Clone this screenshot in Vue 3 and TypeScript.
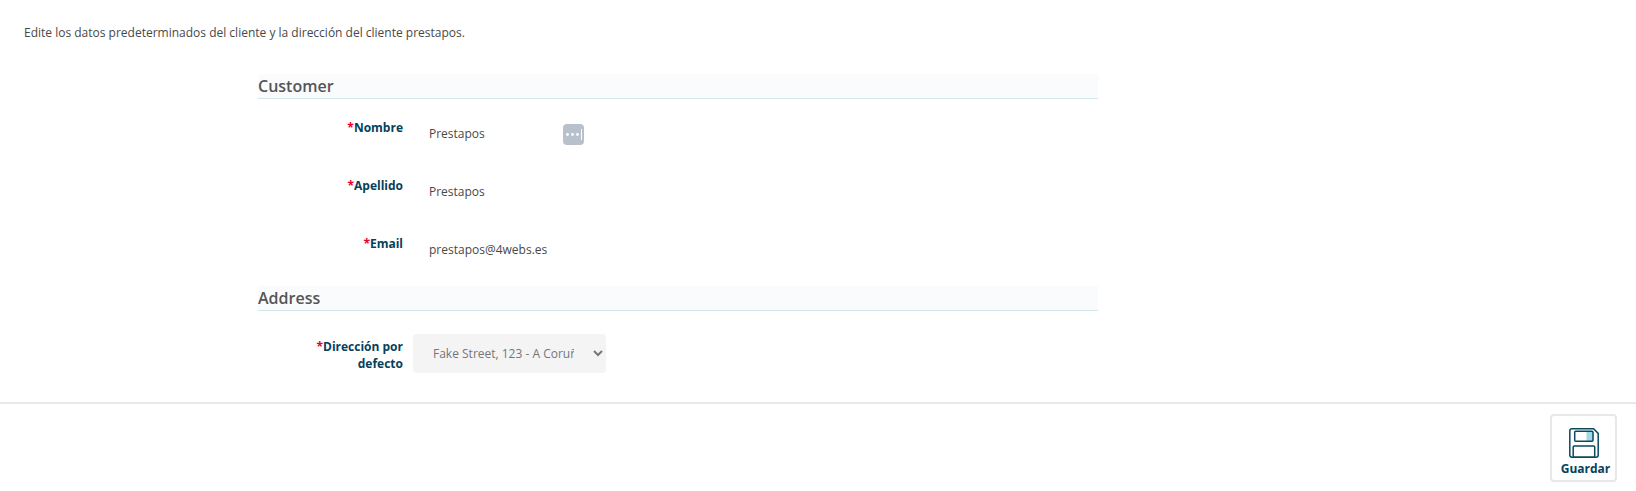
<template>
  <div class="page">
    <p class="intro">Edite los datos predeterminados del cliente y la dirección del cliente prestapos.</p>

    <div class="form">
      <h3 class="section-title">Customer</h3>
      <div v-for="f in fields" :key="f.label" class="row">
        <label class="field-label"><span class="req">*</span>{{ f.label }}</label>
        <div class="field-value">{{ f.value }}</div>
        <span v-if="f.label === 'Nombre'" class="pass-icon">
          <svg width="21" height="21" viewBox="0 0 21 21">
            <circle cx="4.5" cy="10.5" r="1.4" fill="#fff" />
            <circle cx="9.5" cy="10.5" r="1.4" fill="#fff" />
            <circle cx="14.5" cy="10.5" r="1.4" fill="#fff" />
            <rect x="18" y="5" width="1" height="11" fill="#fff" />
          </svg>
        </span>
      </div>

      <h3 class="section-title address-title">Address</h3>
      <div class="row address-row">
        <label class="field-label address-label"><span class="req">*</span>Dirección por defecto</label>
        <select class="select-box" disabled>
          <option>Fake Street, 123 - A Coruña</option>
        </select>
      </div>
    </div>

    <div class="footer">
      <button class="save-btn" type="button">
        <svg width="30" height="30" viewBox="0 0 30 30">
          <path d="M3 .8h21.6L29.2 5.4V27a2.2 2.2 0 0 1-2.2 2.2H3A2.2 2.2 0 0 1 .8 27V3A2.2 2.2 0 0 1 3 .8z" fill="none" stroke="#0a4a5e" stroke-width="1.5" />
          <rect x="17.5" y="3.5" width="6.5" height="9.5" fill="#a5d8e6" />
          <rect x="5.7" y="3.3" width="18.3" height="10" rx="1" fill="none" stroke="#0a4a5e" stroke-width="1.5" />
          <rect x="4.2" y="18" width="21.5" height="11.2" rx="1" fill="none" stroke="#0a4a5e" stroke-width="1.5" />
        </svg>
        <span class="save-label">Guardar</span>
      </button>
    </div>
  </div>
</template>

<script setup lang="ts">
const fields = [
  { label: 'Nombre', value: 'Prestapos' },
  { label: 'Apellido', value: 'Prestapos' },
  { label: 'Email', value: 'prestapos@4webs.es' },
];
</script>

<style scoped>
.page { width: 1636px; height: 491px; background: #fff; font-family: "Open Sans", sans-serif; font-size: 12px; color: #484848; overflow: hidden; }
.intro { margin: 0; padding: 24px 24px 0; font-size: 12px; line-height: 17px; }
.form { width: 840px; margin: 33px 0 0 258px; }
.section-title { margin: 0; height: 24px; line-height: 24px; font-size: 16px; font-weight: 600; color: #555; background: #fafbfc; border-bottom: 1px solid #d5e6ea; }
.address-title { margin-top: 13px; }
.row { display: flex; height: 58px; padding-top: 20px; box-sizing: border-box; }
.field-label { width: 145px; box-sizing: border-box; text-align: right; font-weight: 700; color: #05415a; line-height: 17px; }
.address-label { padding-left: 20px; margin-top: 4px; }
.req { color: #e6002d; }
.field-value { width: 134px; margin: 6px 0 0 26px; line-height: 17px; }
.pass-icon { width: 21px; height: 21px; margin-top: 5px; background: #b8c0cb; border-radius: 4px; display: flex; }
.address-row { padding-top: 23px; height: 91px; }
.select-box { width: 193px; height: 39px; margin-left: 10px; background: #f4f4f4; border: none; border-radius: 4px; padding: 0 16px; font: 12px "Open Sans", sans-serif; color: #767676; opacity: 1; }
.footer { border-top: 2px solid #e8e8e8; height: 90px; box-sizing: border-box; display: flex; justify-content: flex-end; padding: 10px 19px 0 0; }
.save-btn { width: 67px; height: 68px; padding: 12px 0 0; background: #fff; border: 2px solid #e8e8e8; border-radius: 4px; display: flex; flex-direction: column; align-items: center; font: 700 12px/16px "Open Sans", sans-serif; color: #05415a; }
.save-label { margin: 3px 0 0 4px; }
</style>
